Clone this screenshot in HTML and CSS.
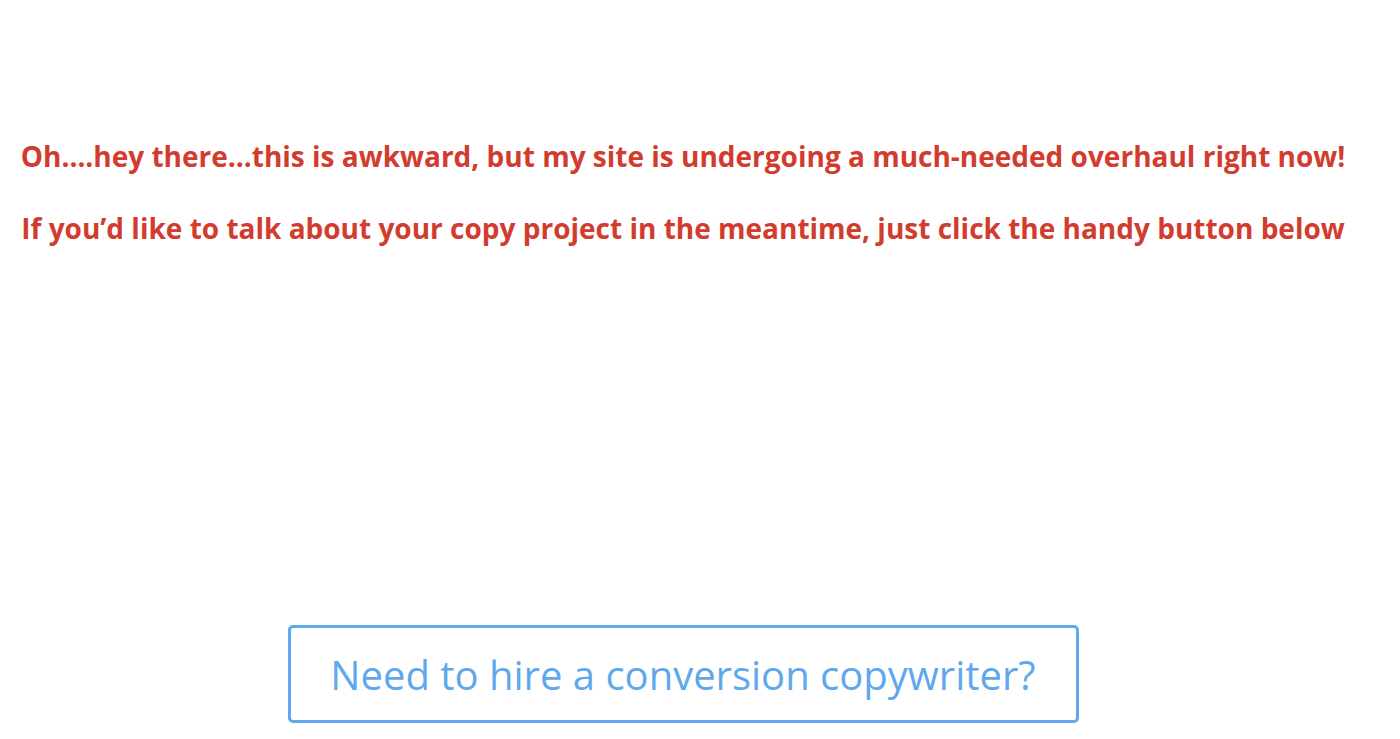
FILE: index.html
```html
<!DOCTYPE html>
<html>
<head>
<meta charset="utf-8">
<link rel="stylesheet" href="styles.css">
</head>
<body>
<main class="page">
  <section class="notice">
    <p class="line">Oh….hey there…this is awkward, but my site is undergoing a much-needed overhaul right now!</p>
    <p class="line">If you’d like to talk about your copy project in the meantime, just click the handy button below</p>
  </section>
  <div class="cta-wrap">
    <a class="cta" href="#">Need to hire a conversion copywriter?</a>
  </div>
</main>
</body>
</html>
```
FILE: styles.css
```css
html, body {
  margin: 0;
  padding: 0;
  background: #ffffff;
}
.page {
  width: 1366px;
  font-family: "Open Sans", sans-serif;
}
.notice {
  padding-top: 138px;
  text-align: center;
}
.line {
  margin: 0 0 36px 0;
  font-size: 28px;
  line-height: 36px;
  font-weight: 700;
  color: #d23c2e;
  white-space: nowrap;
}
.cta-wrap {
  display: flex;
  justify-content: center;
  padding-top: 343px;
}
.cta {
  display: block;
  box-sizing: border-box;
  width: 791px;
  height: 98px;
  border: 3px solid #5fa8ec;
  border-radius: 5px;
  color: #5fa8ec;
  text-decoration: none;
  font-size: 40px;
  font-weight: 400;
  line-height: 94px;
  text-align: center;
}
```
